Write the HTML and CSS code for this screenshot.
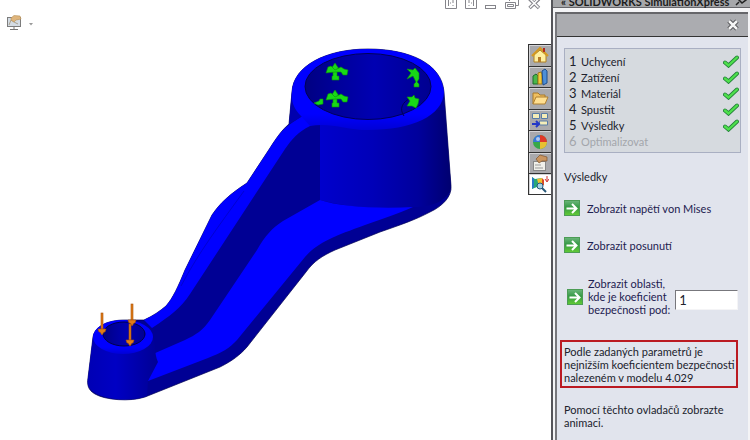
FILE: index.html
```html
<!DOCTYPE html>
<html lang="cs">
<head>
    <meta charset="utf-8">
    <title>SOLIDWORKS SimulationXpress</title>
    <link rel="stylesheet" href="styles.css">
</head>
<body>
    <svg class="defs" aria-hidden="true">
        <defs>
            <linearGradient id="green" x1="0" y1="0" x2="0" y2="1">
                <stop offset="0" stop-color="#6db67c"/>
                <stop offset=".45" stop-color="#359a45"/>
                <stop offset="1" stop-color="#63cc35"/>
            </linearGradient>
        </defs>
        <symbol id="check" viewBox="0 0 16 13">
            <path d="M2 7.5L5.5 10.5L14 2.5" fill="none" stroke="#24803a" stroke-width="4" stroke-linecap="round"/>
            <path d="M2 7.5L5.5 10.5L14 2.5" fill="none" stroke="#4ee04c" stroke-width="2.400" stroke-linecap="round"/>
        </symbol>
        <symbol id="go" viewBox="0 0 16 16">
            <rect x=".5" y=".5" width="15" height="15" fill="url(#green)" stroke="#4c9c55"/>
            <path d="M2.5 8.5H12M8 4L12.5 8.5L8 13" fill="none" stroke="#fff" stroke-width="2"/>
        </symbol>
    </svg>

    <main class="workspace">
        <div class="topbar">
            <button class="tool" aria-label="Zobrazení">
                <svg width="28" height="16" viewBox="0 0 28 16">
                    <rect x="1.5" y="2.5" width="13" height="9" fill="#d4dce4" stroke="#7c7c7c"/>
                    <path d="M3 10L5 5L8 7L12 9" fill="none" stroke="#a9a08e"/>
                    <path d="M5 3L8 0.500L14 1L15 4L10 5L8 7L5 5Z" fill="#dfb57c" stroke="#b79058" stroke-width=".6"/>
                    <path d="M8 12V14M4 14.500H12" stroke="#777" fill="none"/>
                    <path d="M23 8H27L25 10.500Z" fill="#999"/>
                </svg>
            </button>
            <div class="window-buttons">
                <button aria-label="Vlevo"><svg width="12" height="12" viewBox="0 0 12 12"><path d="M.5 0V8.500H11.500V0M3.500 0V6M5 3H6M8 0V3M8 5V6" fill="none" stroke="#85858b"/></svg></button>
                <button aria-label="Vpravo"><svg width="12" height="12" viewBox="0 0 12 12"><path d="M.5 0V8.500H11.500V0M8.500 0V6M6 3H7M4 0V3M4 5V6" fill="none" stroke="#85858b"/></svg></button>
                <button aria-label="Minimalizovat"><svg width="12" height="12" viewBox="0 0 12 12"><rect x=".5" y="5.500" width="10" height="3" fill="#fff" stroke="#85858b"/></svg></button>
                <button aria-label="Obnovit"><svg width="15" height="12" viewBox="0 0 15 12"><path d="M4.500 0V1M13.500 0V5.500H11M.5 2.500H10.500V8.500H.5ZM2.500 4.500H8.500V6.500H2.500Z" fill="none" stroke="#85858b"/></svg></button>
                <button aria-label="Zavřít"><svg width="13" height="12" viewBox="0 0 13 12"><path d="M1.500 -1L11 8M11 -1L1.500 8" stroke="#85858b" stroke-width="3.500"/><path d="M2 -1L10.500 7.500M10.500 -1L2 7.500" stroke="#fff" stroke-width="1.500"/></svg></button>
            </div>
        </div>

        <div class="view">
            <svg class="model" viewBox="0 40 528 400" preserveAspectRatio="xMinYMin meet" role="img" aria-label="Model páky">
                <defs>
                    <linearGradient id="wall" gradientUnits="userSpaceOnUse" x1="320" y1="0" x2="451" y2="0">
                        <stop offset="0" stop-color="#0000cc"/>
                        <stop offset=".4" stop-color="#0000b8"/>
                        <stop offset=".75" stop-color="#00009c"/>
                        <stop offset="1" stop-color="#000070"/>
                    </linearGradient>
                    <linearGradient id="bore" x1="0" x2="1">
                        <stop offset="0" stop-color="#000082"/>
                        <stop offset=".25" stop-color="#00009a"/>
                        <stop offset=".55" stop-color="#0000b2"/>
                        <stop offset="1" stop-color="#000090"/>
                    </linearGradient>
                    <linearGradient id="boss" x1="0" x2="1">
                        <stop offset="0" stop-color="#0000b4"/>
                        <stop offset=".4" stop-color="#0000c4"/>
                        <stop offset="1" stop-color="#000094"/>
                    </linearGradient>
                    <linearGradient id="lip" x1="0" y1="0" x2="0" y2="1">
                        <stop offset=".8" stop-color="#0000ff"/>
                        <stop offset="1" stop-color="#0000d6"/>
                    </linearGradient>
                    <g id="fixture">
                        <path d="M0 -9L4 -3H2V4H4V8H-3V4H-2V-3H-4Z"/>
                        <path d="M0 0L-9 1L-7 -5L-4 -6L0 -2L6 -5L9 -3L13 -2L12 3L8 3L6 0Z"/>
                    </g>
                    <g id="force" fill="#e07c18" stroke="#a85208" stroke-width=".6">
                        <rect x="-1" y="-18" width="2" height="16"/>
                        <path d="M-4 -2H4L3 1H2L0 4L-2 1H-3Z"/>
                    </g>
                </defs>

                <!-- whole body -->
                <path fill="#000094" stroke="#000050" stroke-width=".7" d="M292 92C293 66 326 49 368 49C410 49 442 64 444 92L451 186C452 196 443 206 430 212C415 220 400 225 380 232L335 250C322 256 314 261 306 272L247 347C240 355 232 361 220 367L145 397C130 402 105 400 95 394C88 390 87 385 88 378L93 337C95 326 108 320 125 320H144C153 316 160 311 166 306C173 298 178 287 185 270L212 215C220 203 230 194 247 183L270 148C277 137 282 130 289 124Z"/>
                <!-- cylinder wall -->
                <path fill="url(#wall)" d="M320 110H445L451 186C451 197 436 208 411 207C380 210 345 207 320 200Z"/>
                <!-- floor -->
                <path fill="#0000ff" d="M320 200C340 207 380 209 413 207C400 213 382 219 365 225C335 236 318 242 305 257L237 340C230 348 221 353 208 358L148 381L153 354L185 340C196 335 203 330 210 320L257 250C265 236 272 228 283 221Z"/>
                <!-- upper rim of the arm -->
                <path fill="#0000ff" d="M289 125C300 117 305 115 315 105L350 124C330 119 320 121 310 126C298 132 292 139 285 149L190 294C181 308 170 316 152 328L144 320C153 316 160 311 166 306C173 298 178 287 185 270L212 215C220 203 230 194 247 183L270 148C277 137 282 130 289 125Z"/>
                <path fill="none" stroke="#0000d2" d="M181 286C199 252 218 227 244 191"/>
                <!-- big ring -->
                <path fill="#0000ae" d="M292 90L289 124L310 112Z"/>
                <path fill="url(#lip)" d="M292 92C293 66 326 49 368 49C410 49 442 64 444 92C443 116 412 130 368 130C346 130 330 122 310 126L301 116C293 108 291 100 292 92Z"/>
                <ellipse cx="368" cy="86.500" rx="63" ry="33" fill="url(#bore)" stroke="#000058"/>
                <path d="M404 116C399 109 402 102 411 98" fill="none" stroke="#000050"/>
                <!-- small boss -->
                <path fill="url(#boss)" d="M93 337L88 378C86 388 92 393 105 397C122 401 137 400 147 396L148 381L158 362C154 354 156 343 152 335Z"/>
                <ellipse cx="123" cy="337" rx="30" ry="17" fill="url(#lip)"/>
                <ellipse cx="124" cy="334" rx="21" ry="12" fill="url(#bore)" stroke="#000048"/>
                <!-- fixtures and forces -->
                <g fill="#18d818" stroke="#079407" stroke-width=".6">
                    <use href="#fixture" x="335" y="72"/>
                    <use href="#fixture" x="335" y="99"/>
                    <path d="M407 69L413 70L415 68L419 73V79L417 82L419 84V87H414V84L416 82L413 76L407 79L411 73Z"/>
                    <path d="M407 97L412 97L414 95L415 98L419 99L418 104L416 108L412 106L407 106L410 101Z"/>
                    <path d="M314 103L319 101L320 99H323V104L318 105Z"/>
                </g>
                <use href="#force" x="102" y="331"/>
                <use href="#force" x="132" y="322"/>
                <use href="#force" x="130" y="342"/>
            </svg>

            <nav class="tabs">
                <button aria-label="Zdroje"><svg viewBox="0 0 18 18"><path d="M3 9V16H15V9L9 4Z" fill="#fff0a0" stroke="#b08020"/><path d="M1 10L9 2L17 10" fill="none" stroke="#d59a20" stroke-width="2"/><path d="M13 2V6" stroke="#b02a20" stroke-width="2"/><rect x="7" y="11" width="3" height="5" fill="#b67b28"/></svg></button>
                <button aria-label="Knihovna návrhů"><svg viewBox="0 0 18 18"><path d="M2 8L5 6L7 8V16H2Z" fill="#4ab84a" stroke="#1d6c2b"/><path d="M7 5L10 4L11 6V16H7Z" fill="#f2c93a" stroke="#a07818"/><path d="M11 3L14 1L16 3V15L12 17Z" fill="#4d8fd8" stroke="#1f4e8c"/></svg></button>
                <button aria-label="Průzkumník souborů"><svg viewBox="0 0 18 18"><path d="M2 15V4H7L9 6H14V9" fill="#f0c060" stroke="#a87828"/><path d="M2 15L5 8H17L14 15Z" fill="#ffdf90" stroke="#b08030"/></svg></button>
                <button aria-label="Paleta zobrazení"><svg viewBox="0 0 18 18"><path d="M1.500 2.500H8.500V7.500H1.500ZM10.500 2.500H16.500V7.500H10.500ZM8.500 10H16.500V14H8.500Z" fill="#f4edb8" stroke="#587ca8"/><path d="M1 13H7M5 10L8 13L5 16" fill="none" stroke="#2238c8" stroke-width="2"/></svg></button>
                <button aria-label="Vzhledy"><svg viewBox="0 0 18 18"><circle cx="9" cy="9" r="7" fill="#38a848"/><path d="M9 2A7 7 0 0 1 16 9H9Z" fill="#e03828"/><path d="M16 9A7 7 0 0 1 9 16V9Z" fill="#e8c030"/><path d="M2 9A7 7 0 0 1 9 2V9Z" fill="#3878d8"/><circle cx="7" cy="6" r="2" fill="#fff" opacity=".6"/></svg></button>
                <button aria-label="Vlastnosti"><svg viewBox="0 0 18 18"><rect x="2.500" y="7.500" width="12" height="9" fill="#f0f0ea" stroke="#888"/><path d="M4 11H10M4 14H12" stroke="#999"/><path d="M5 5L9 1L16 3V7L11 7L8 9Z" fill="#c99560" stroke="#80552c" stroke-width=".7"/></svg></button>
                <button class="active" aria-label="SimulationXpress"><svg viewBox="0 0 18 18"><path d="M1 2L4 4L11 3V11L6 12L1 14Z" fill="#28a878"/><path d="M6 4L11 3V11L8 11Z" fill="#f0c030"/><path d="M11 3L13 5V10L11 11Z" fill="#d84a28"/><path d="M1 2L3 4V12L1 14Z" fill="#2878c8"/><path d="M16 1V6M14 4L16 7L18 4" fill="none" stroke="#d03030"/><circle cx="9" cy="11" r="3" fill="#a4d2e4" stroke="#285878"/><path d="M11 13L15 17" stroke="#285878" stroke-width="2"/></svg></button>
            </nav>
        </div>
    </main>

    <aside class="panel">
        <div class="panel-title"><span>« SOLIDWORKS SimulationXpress</span>
            <svg width="12" height="12" viewBox="0 0 12 12"><path d="M1 10L4 7M3 4L7 8L11 5L9 1L6 0Z" fill="none" stroke="#222" stroke-width="1.500"/></svg>
        </div>
        <div class="panel-body">
            <div class="panel-head">
                <button aria-label="Zavřít panel"><svg width="12" height="12" viewBox="0 0 12 12"><path d="M2 2L10 10M10 2L2 10" stroke="#48484c" stroke-width="4.500"/><path d="M2 2L10 10M10 2L2 10" stroke="#f4f4f4" stroke-width="2.500"/></svg></button>
            </div>
            <div class="content">
                <ol class="steps">
                    <li><b>1</b>Uchycení<svg><use href="#check"/></svg></li>
                    <li><b>2</b>Zatížení<svg><use href="#check"/></svg></li>
                    <li><b>3</b>Materiál<svg><use href="#check"/></svg></li>
                    <li><b>4</b>Spustit<svg><use href="#check"/></svg></li>
                    <li><b>5</b>Výsledky<svg><use href="#check"/></svg></li>
                    <li class="disabled"><b>6</b>Optimalizovat</li>
                </ol>

                <h2>Výsledky</h2>
                <button class="action"><svg><use href="#go"/></svg>Zobrazit napětí von Mises</button>
                <button class="action"><svg><use href="#go"/></svg>Zobrazit posunutí</button>
                <div class="factor">
                    <button class="action" aria-label="Zobrazit oblasti"><svg><use href="#go"/></svg></button>
                    <label for="factor">Zobrazit oblasti,<br>kde je koeficient<br>bezpečnosti pod:</label>
                    <input type="text" id="factor" value="1">
                </div>

                <p class="result">Podle zadaných parametrů je<br>nejnižším koeficientem bezpečnosti<br>nalezeném v modelu 4.029</p>
                <p class="hint">Pomocí těchto ovladačů zobrazte animaci.</p>
            </div>
        </div>
    </aside>
</body>
</html>
```

FILE: styles.css
```css
* {
    box-sizing: border-box;
}
body {
    margin: 0;
    display: flex;
    min-height: 100vh;
    background: #fff;
    color: #20222c;
    font-family: Lato, "Noto Sans", sans-serif;
    font-size: 11px;
    line-height: 13px;
    overflow: hidden;
}
button {
    padding: 0;
    border: none;
    background: none;
    color: inherit;
    font: inherit;
    cursor: pointer;
}
svg {
    display: block;
    flex: none;
}
.defs {
    position: absolute;
    width: 0;
    height: 0;
}

/* graphics area */
.workspace {
    flex: 1;
    min-width: 0;
    display: flex;
    flex-direction: column;
}
.topbar {
    display: flex;
    justify-content: space-between;
    align-items: flex-start;
    height: 40px;
    padding: 0 10px 0 6px;
}
.tool {
    margin-top: 15px;
}
.window-buttons {
    display: flex;
    gap: 8px;
}
.view {
    flex: 1;
    display: flex;
    align-items: flex-start;
}
.model {
    flex: 1;
    min-width: 0;
}
.tabs {
    display: grid;
    grid-template-rows: repeat(7, 1fr);
    width: 23px;
    height: 151px;
    margin-top: 4px;
    border-left: 1px solid #333;
}
.tabs button {
    display: grid;
    place-items: center;
    background: #a9a9ac;
    border-top: 1px solid #333;
    box-shadow: inset 1px 1px #d4d4d6;
}
.tabs .active {
    background: #fff;
    border-bottom: 1px solid #333;
}
.tabs svg {
    width: 18px;
    height: 18px;
}

/* task pane */
.panel {
    width: 199px;
    display: flex;
    flex-direction: column;
    border-left: 2px solid #55555a;
    background: #f4f4f6;
}
.panel-title {
    display: flex;
    justify-content: space-between;
    align-items: flex-end;
    height: 8px;
    padding: 0 3px 0 8px;
    background: #a6a7aa;
    border-bottom: 1px solid #66666a;
    color: #1c1c1c;
    font-weight: bold;
    line-height: 11px;
    white-space: nowrap;
}
.panel-body {
    flex: 1;
    margin: 4px 2px 0 2px;
    border-top: 2px solid #66666a;
    border-left: 2px solid #77777c;
    background: #e1e4ed;
}
.panel-head {
    display: flex;
    justify-content: flex-end;
    align-items: center;
    height: 23px;
    padding-right: 9px;
    background: #abacb0;
    border-bottom: 1px solid #333;
}
.content {
    padding: 11px 7px;
}
.steps {
    margin: 0 0 17px;
    padding: 4px 1px 3px 4px;
    list-style: none;
    border: 1px solid #a9afc2;
    background: #d6dadf;
}
.steps li {
    display: flex;
    align-items: center;
    height: 16px;
}
.steps b {
    width: 12px;
    font-size: 13px;
    font-weight: normal;
}
.steps svg {
    width: 16px;
    height: 13px;
    margin-left: auto;
}
.steps .disabled {
    color: #a3a6ab;
}
h2 {
    margin: 0 0 17px;
    font-size: 11px;
    font-weight: normal;
}
.action {
    display: flex;
    align-items: center;
    gap: 7px;
    margin-bottom: 21px;
    color: #1d2150;
}
.action svg {
    width: 16px;
    height: 16px;
}
.factor {
    display: flex;
    align-items: center;
    gap: 5px;
    margin: 24px 0 24px 3px;
    color: #1d2150;
    white-space: nowrap;
}
.factor .action {
    margin: 0;
}
.factor input {
    flex: 1;
    min-width: 0;
    height: 20px;
    margin: 7px 3px 0 0;
    padding: 0 3px;
    border: 1px solid;
    border-color: #77777c #f4f4f6 #f4f4f6 #77777c;
    background: #fff;
    color: #20222c;
    font: inherit;
    font-size: 13px;
}
.result {
    margin: 0 3px 15px -4px;
    padding: 3px 0 2px 2px;
    border: 2px solid #bb1a22;
    white-space: nowrap;
}
.hint {
    margin: 0;
}
```
